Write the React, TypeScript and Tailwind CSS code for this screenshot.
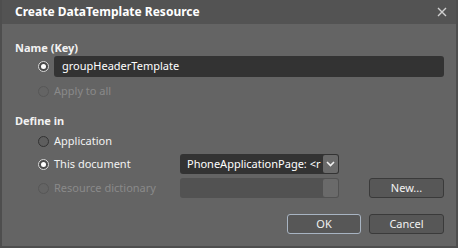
import React from "react";

function Radio({ checked = false, disabled = false }: { checked?: boolean; disabled?: boolean }) {
  if (checked) {
    return (
      <div className="w-[11px] h-[11px] rounded-full border border-[#d8d8d8] bg-[#4a4a4a] flex items-center justify-center shrink-0">
        <div className="w-[5px] h-[5px] rounded-full bg-white" />
      </div>
    );
  }
  return (
    <div
      className={
        disabled
          ? "w-[11px] h-[11px] rounded-full border border-[#575757] shrink-0"
          : "w-[11px] h-[11px] rounded-full border border-[#333333] bg-[#5e5e5e] shrink-0"
      }
    />
  );
}

export default function App() {
  return (
    <div
      className="w-[458px] h-[248px] bg-[#646464] flex flex-col border-l-2 border-r-2 border-b-2 border-[#4e4e4e] overflow-hidden"
      style={{ fontFamily: '"Noto Sans", "Open Sans", sans-serif' }}
    >
      <div className="h-[24px] bg-[#535353] flex items-center justify-between pl-[13px] pr-[9px] shrink-0">
        <span className="text-[12px] font-bold text-white leading-none">Create DataTemplate Resource</span>
        <svg width="10" height="10" viewBox="0 0 10 10" className="text-[#d0d0d0]">
          <path d="M1 1 L9 9 M9 1 L1 9" stroke="currentColor" strokeWidth="1.4" />
        </svg>
      </div>
      <div className="flex flex-col pl-[13px] pr-[12px] text-[11px] text-[#f2f2f2]">
        <div className="h-[16px] mt-[15px] flex items-center font-bold leading-none">Name (Key)</div>
        <div className="h-[21px] mt-[1px] flex items-center">
          <div className="ml-[23px] mr-[5px]">
            <Radio checked />
          </div>
          <div className="flex-1 h-[21px] bg-[#333333] rounded-[3px] flex items-center pl-[8px] text-white">
            groupHeaderTemplate
          </div>
        </div>
        <div className="h-[16px] mt-[6px] flex items-center">
          <div className="ml-[23px] mr-[5px]">
            <Radio disabled />
          </div>
          <span className="text-[#8a8a8a]">Apply to all</span>
        </div>
        <div className="h-[16px] mt-[13px] flex items-center font-bold leading-none">Define in</div>
        <div className="h-[16px] mt-[5px] flex items-center">
          <div className="ml-[23px] mr-[5px]">
            <Radio />
          </div>
          <span>Application</span>
        </div>
        <div className="h-[20px] mt-[5px] flex items-center">
          <div className="ml-[23px] mr-[5px]">
            <Radio checked />
          </div>
          <span className="w-[126px]">This document</span>
          <div className="w-[159px] h-[20px] bg-[#333333] rounded-[3px] flex items-center overflow-hidden">
            <span className="flex-1 pl-[7px] whitespace-nowrap overflow-hidden text-white">PhoneApplicationPage: &lt;r</span>
            <div className="w-[15px] h-[18px] mr-[1px] bg-[#6a6a6a] rounded-[2px] flex items-center justify-center shrink-0">
              <svg width="9" height="6" viewBox="0 0 9 6">
                <path d="M1 1 L4.5 4.5 L8 1" stroke="#f0f0f0" strokeWidth="1.6" fill="none" />
              </svg>
            </div>
          </div>
        </div>
        <div className="h-[20px] mt-[4px] flex items-center">
          <div className="ml-[23px] mr-[5px]">
            <Radio disabled />
          </div>
          <span className="w-[126px] text-[#8a8a8a]">Resource dictionary</span>
          <div className="w-[159px] h-[20px] bg-[#525252] rounded-[3px] flex items-center justify-end">
            <div className="w-[15px] h-[18px] mr-[1px] bg-[#6a6a6a] rounded-[2px]" />
          </div>
          <div className="ml-[30px] w-[75px] h-[20px] bg-[#575757] border border-[#3a3a3a] rounded-[3px] flex items-center justify-center">
            New...
          </div>
        </div>
        <div className="h-[20px] mt-[16px] flex items-center justify-end gap-[8px]">
          <div className="w-[74px] h-[20px] bg-[#575757] border border-[#a8b4c2] rounded-[3px] flex items-center justify-center">
            OK
          </div>
          <div className="w-[75px] h-[20px] bg-[#575757] border border-[#3a3a3a] rounded-[3px] flex items-center justify-center">
            Cancel
          </div>
        </div>
      </div>
    </div>
  );
}
